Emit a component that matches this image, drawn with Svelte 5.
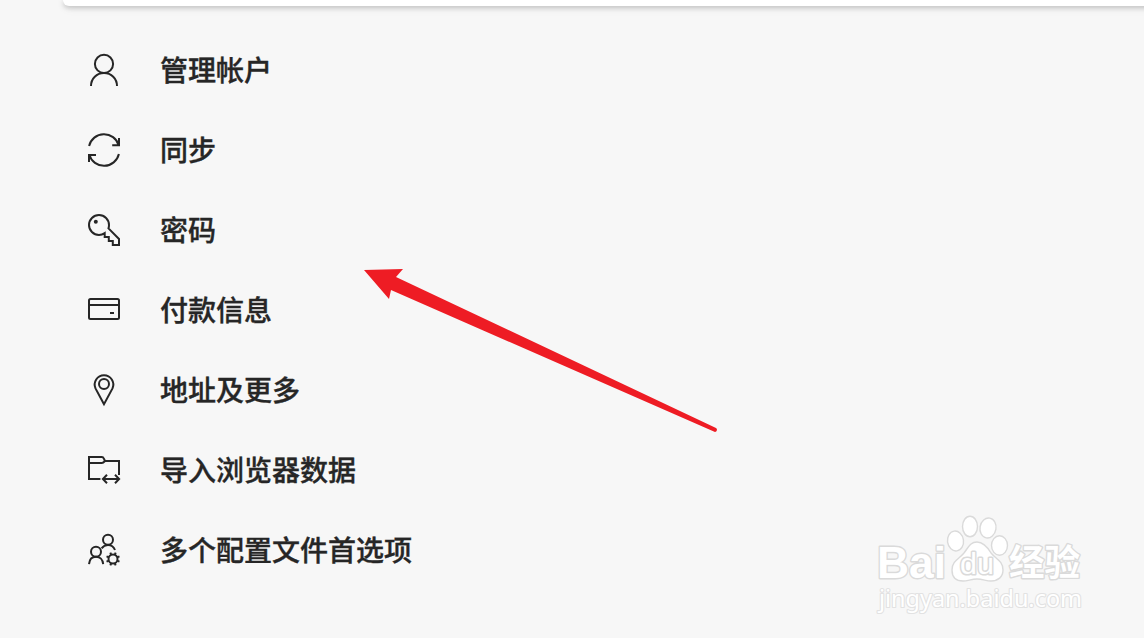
<script>
  const items = [
    { id: 'account', label: '管理帐户' },
    { id: 'sync', label: '同步' },
    { id: 'password', label: '密码' },
    { id: 'payment', label: '付款信息' },
    { id: 'address', label: '地址及更多' },
    { id: 'import', label: '导入浏览器数据' },
    { id: 'profiles', label: '多个配置文件首选项' }
  ];

  const teeth = [0, 45, 90, 135, 180, 225, 270, 315];
</script>

<main>
  <div class="card"></div>

  <ul class="menu">
    {#each items as item (item.id)}
      <li class="row">
        <svg class="icon" viewBox="0 0 32 32">
          {#if item.id === 'account'}
            <circle cx="16" cy="9.9" r="9.1" />
            <path d="M3 32C3 24.5 8.7 19 16 19S29 24.5 29 32" />
          {:else if item.id === 'sync'}
            <path d="M1.1 12A15.3 15.3 0 0 1 30.7 11.2M31 4V11.3H24.2" />
            <path d="M30.9 20A15.3 15.3 0 0 1 1.3 20.8M1 28V20.9H8" />
          {:else if item.id === 'password'}
            <path d="M20.5 14.4L31 25V31H24.8V27H20.8V23H16.7V19.2Q14 21 11 21A10 10 0 1 1 21 11Q21 12.8 20.5 14.4Z" />
            <circle class="solid" cx="7.8" cy="7.8" r="2" />
          {:else if item.id === 'payment'}
            <rect x="1" y="5" width="30" height="20" rx="1.5" />
            <path d="M1 11H31M22 19H26" />
          {:else if item.id === 'address'}
            <path d="M16 30.2L7.5 14.4A9.3 9.3 0 1 1 24.5 14.4Z" />
            <circle cx="16" cy="10" r="5" />
          {:else if item.id === 'import'}
            <path d="M12.4 25H1V3H13.8Q15.2 3 16 4.8L17 7H31V21" />
            <path d="M1 9H13.8Q15.2 9 17 7" />
            <path d="M15 25H31M19 20.8L14.9 25L19 29.2M27 20.8L31.1 25L27 29.2" />
          {:else}
            <circle cx="20" cy="5.8" r="5" />
            <path d="M13.6 14.4Q16 11 20 11Q25 11 27 16" />
            <circle cx="8" cy="17.7" r="5" />
            <path d="M1 30.2C1.4 25.5 4.2 22.8 8 22.8S14.8 25.5 15.2 30.2" />
            <circle cx="25" cy="25" r="4.5" />
            {#each teeth as angle}
              <path d="M25 20.6V18" transform="rotate({angle + 22.5} 25 25)" />
            {/each}
          {/if}
        </svg>
        <span>{item.label}</span>
      </li>
    {/each}
  </ul>

  <svg class="arrow" viewBox="0 0 356 166">
    <path d="M0 3L39 2L32 10L352 161A2.2 2.2 0 0 1 351 165L27 23L25 32Z" />
  </svg>

  <svg class="watermark" viewBox="0 0 220 110">
    <g class="logo">
      <text class="latin" x="5" y="68" textLength="69" lengthAdjust="spacingAndGlyphs">Bai</text>
      <ellipse cx="83.5" cy="31" rx="8" ry="10" transform="rotate(-8 83.5 31)" />
      <ellipse cx="98" cy="16.5" rx="7.5" ry="10.3" />
      <ellipse cx="116" cy="18" rx="8" ry="10" transform="rotate(10 116 18)" />
      <ellipse cx="127.5" cy="35.5" rx="8" ry="9.8" />
      <path d="M105 32C112 32 116 38 119 43C124 49 131 51 131 60C131 67 126 71 119 71C114 71 111 69 105 69S96 71 91 71C84 71 80 67 80 60C80 51 87 49 92 43C96 38 98 32 105 32Z" />
      <text class="du" x="88" y="64" textLength="34" lengthAdjust="spacingAndGlyphs">du</text>
      <text class="han" x="137" y="66" textLength="71" lengthAdjust="spacingAndGlyphs">经验</text>
    </g>
    <text class="url" x="7" y="97" textLength="203" lengthAdjust="spacingAndGlyphs">jingyan.baidu.com</text>
  </svg>
</main>

<style>
  :global(body) {
    margin: 0;
    background: #f7f7f7;
  }

  main {
    position: relative;
    height: 638px;
    overflow: hidden;
    background: #f7f7f7;
    color: #262626;
    font-family: "Noto Sans CJK SC", sans-serif;
  }

  .card {
    height: 6px;
    margin: 0 -12px 0 63px;
    background: #fff;
    border-radius: 0 0 8px 8px;
    box-shadow: 0 2px 5px rgba(0, 0, 0, 0.2), 0 1px 12px rgba(0, 0, 0, 0.07);
  }

  .menu {
    margin: 24px 0 0;
    padding: 0 0 0 88px;
    list-style: none;
  }

  .row {
    display: flex;
    align-items: center;
    gap: 40px;
    height: 80px;
    font-size: 28px;
    font-weight: 500;
    line-height: 40px;
    white-space: nowrap;
  }

  .row span {
    padding-bottom: 2px;
    -webkit-text-stroke: 0.35px #262626;
  }

  .icon {
    width: 32px;
    height: 32px;
    overflow: visible;
    fill: none;
    stroke: #262626;
    stroke-width: 2;
  }

  .icon .solid {
    fill: #262626;
    stroke: none;
  }

  /* drawn over the menu */
  .arrow {
    position: absolute;
    left: 364px;
    top: 267px;
    width: 356px;
    height: 166px;
    fill: #ee1c24;
  }

  .watermark {
    position: absolute;
    left: 872px;
    top: 510px;
    width: 220px;
    height: 110px;
    fill: #fff;
    stroke: #dadada;
    stroke-width: 1.4;
    overflow: visible;
  }

  .logo text {
    paint-order: stroke;
    stroke-width: 2.8;
    stroke-linejoin: round;
  }

  .latin {
    font: bold 45px "Liberation Sans", sans-serif;
  }

  .logo .du {
    font: 30px "Liberation Sans", sans-serif;
    stroke-width: 3;
  }

  .han {
    font: bold 36px "Noto Sans CJK SC", sans-serif;
  }

  .url {
    font: 23px "Noto Sans", sans-serif;
    paint-order: stroke;
    stroke: #e2e2e2;
    stroke-width: 2.2;
    stroke-linejoin: round;
  }
</style>
